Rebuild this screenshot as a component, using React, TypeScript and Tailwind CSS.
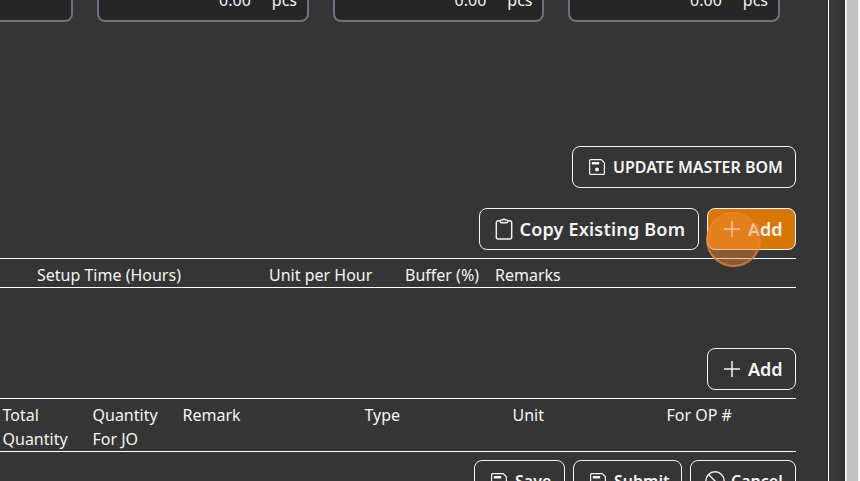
import type { ReactNode } from "react";

function SaveIcon() {
  return (
    <svg className="h-4 w-4 shrink-0" viewBox="0 0 16 16" fill="none" stroke="currentColor" strokeWidth="1.2">
      <path d="M1.6.6h10.6l3.2 3.2v10.6a1 1 0 0 1-1 1H1.6a1 1 0 0 1-1-1V1.6a1 1 0 0 1 1-1Z" />
      <path d="M2.800 3h7.400v2.500H2.800Z" fill="currentColor" stroke="none" />
      <circle cx="8" cy="10.4" r="2" fill="currentColor" stroke="none" />
    </svg>
  );
}

function ClipboardIcon() {
  return (
    <svg className="h-[22px] w-[18px] shrink-0" viewBox="0 0 18 22" fill="none" stroke="currentColor" strokeWidth="1.45">
      <path d="M5.300 2.800H3.300A2 2 0 0 0 1.300 4.800V19a2 2 0 0 0 2 2h11.400a2 2 0 0 0 2-2V4.800a2 2 0 0 0-2-2h-2" />
      <path d="M6.300 2h1Q9 .6 10.700 2h1a1 1 0 0 1 1 1v.7a1 1 0 0 1-1 1H6.300a1 1 0 0 1-1-1V3a1 1 0 0 1 1-1Z" />
    </svg>
  );
}

function PlusIcon() {
  return (
    <svg className="h-4 w-4 shrink-0" viewBox="0 0 16 16" stroke="currentColor" strokeWidth="1.5">
      <path d="M8 0v16M0 8h16" />
    </svg>
  );
}

function BanIcon() {
  return (
    <svg className="h-5 w-5 shrink-0" viewBox="0 0 20 20" fill="none" stroke="currentColor" strokeWidth="1.4">
      <circle cx="10" cy="10" r="9.2" />
      <path d="m3.500 3.500 13 13" />
    </svg>
  );
}

function Button({ className, icon, children }: { className: string; icon: ReactNode; children: ReactNode }) {
  return (
    <button
      className={`flex h-[42px] shrink-0 items-center rounded-lg border border-[#f4f4f4] font-semibold whitespace-nowrap ${className}`}
    >
      {icon}
      {children}
    </button>
  );
}

function QuantityField() {
  return (
    <div className="flex h-[42px] w-[211.5px] shrink-0 items-center justify-end gap-[21px] rounded-lg border-2 border-[#6b7280] bg-[#262626] pr-[9.5px] pb-[2px]">
      <span>0.00</span>
      <span>pcs</span>
    </div>
  );
}

export default function App() {
  return (
    <div className="flex h-[481px] w-[860px] overflow-hidden bg-[#353535] font-['Noto_Sans',sans-serif] text-base leading-6 text-[#f4f4f4]">
      <main className="flex w-[829px] shrink-0 flex-col overflow-hidden border-r border-white pr-8">
        <div className="-mt-5 flex h-[42px] shrink-0 gap-6">
          <div className="h-[42px] w-[73px] shrink-0 rounded-r-lg border-2 border-l-0 border-[#6b7280] bg-[#262626]" />
          <QuantityField />
          <QuantityField />
          <QuantityField />
        </div>
        <div className="mt-[124px] flex justify-end">
          <Button className="w-[224px] gap-2 pl-4" icon={<SaveIcon />}>
            UPDATE MASTER BOM
          </Button>
        </div>
        <div className="mt-5 flex justify-end gap-2">
          <Button className="w-[220px] gap-[6.500px] pl-[15px] text-lg tracking-[0.2px]" icon={<ClipboardIcon />}>
            Copy Existing Bom
          </Button>
          <div className="relative">
            <Button className="w-[89px] gap-2 bg-[#d97706] pl-4 text-lg" icon={<PlusIcon />}>
              Add
            </Button>
            <div className="absolute top-1 -left-px h-[55px] w-[55px] rounded-full border-2 border-[#e8833a]/70 bg-[#f28c38]/45" />
          </div>
        </div>
        <div className="mt-2 flex h-[30px] shrink-0 items-center border-y border-white pt-1 pl-[37px]">
          <span className="w-[232px] shrink-0">Setup Time (Hours)</span>
          <span className="w-[136px] shrink-0">Unit per Hour</span>
          <span className="w-[90px] shrink-0">Buffer (%)</span>
          <span>Remarks</span>
        </div>
        <div className="mt-[60px] flex justify-end">
          <Button className="w-[89px] gap-2 pl-4 text-lg" icon={<PlusIcon />}>
            Add
          </Button>
        </div>
        <div className="mt-2 flex h-[54px] shrink-0 items-start border-y border-white pt-1 pl-[2.500px]">
          <span className="w-[90px] shrink-0">Total<br />Quantity</span>
          <span className="w-[90px] shrink-0">Quantity<br />For JO</span>
          <span className="w-[182px] shrink-0">Remark</span>
          <span className="w-[148px] shrink-0">Type</span>
          <span className="w-[154px] shrink-0">Unit</span>
          <span>For OP #</span>
        </div>
        <div className="mt-2 flex shrink-0 justify-end gap-2">
          <Button className="w-[91px] gap-2 pl-4" icon={<SaveIcon />}>
            Save
          </Button>
          <Button className="w-[109px] gap-2 pl-4" icon={<SaveIcon />}>
            Submit
          </Button>
          <Button className="w-[106px] gap-[6px] pl-[14px]" icon={<BanIcon />}>
            Cancel
          </Button>
        </div>
      </main>
      <div className="w-4 shrink-0 bg-linear-to-r from-[#3a3a3a] to-[#323232]" />
      <div className="w-[15px] shrink-0 border-x-2 border-[#f1f1f1] bg-[#c1c1c1]" />
    </div>
  );
}
